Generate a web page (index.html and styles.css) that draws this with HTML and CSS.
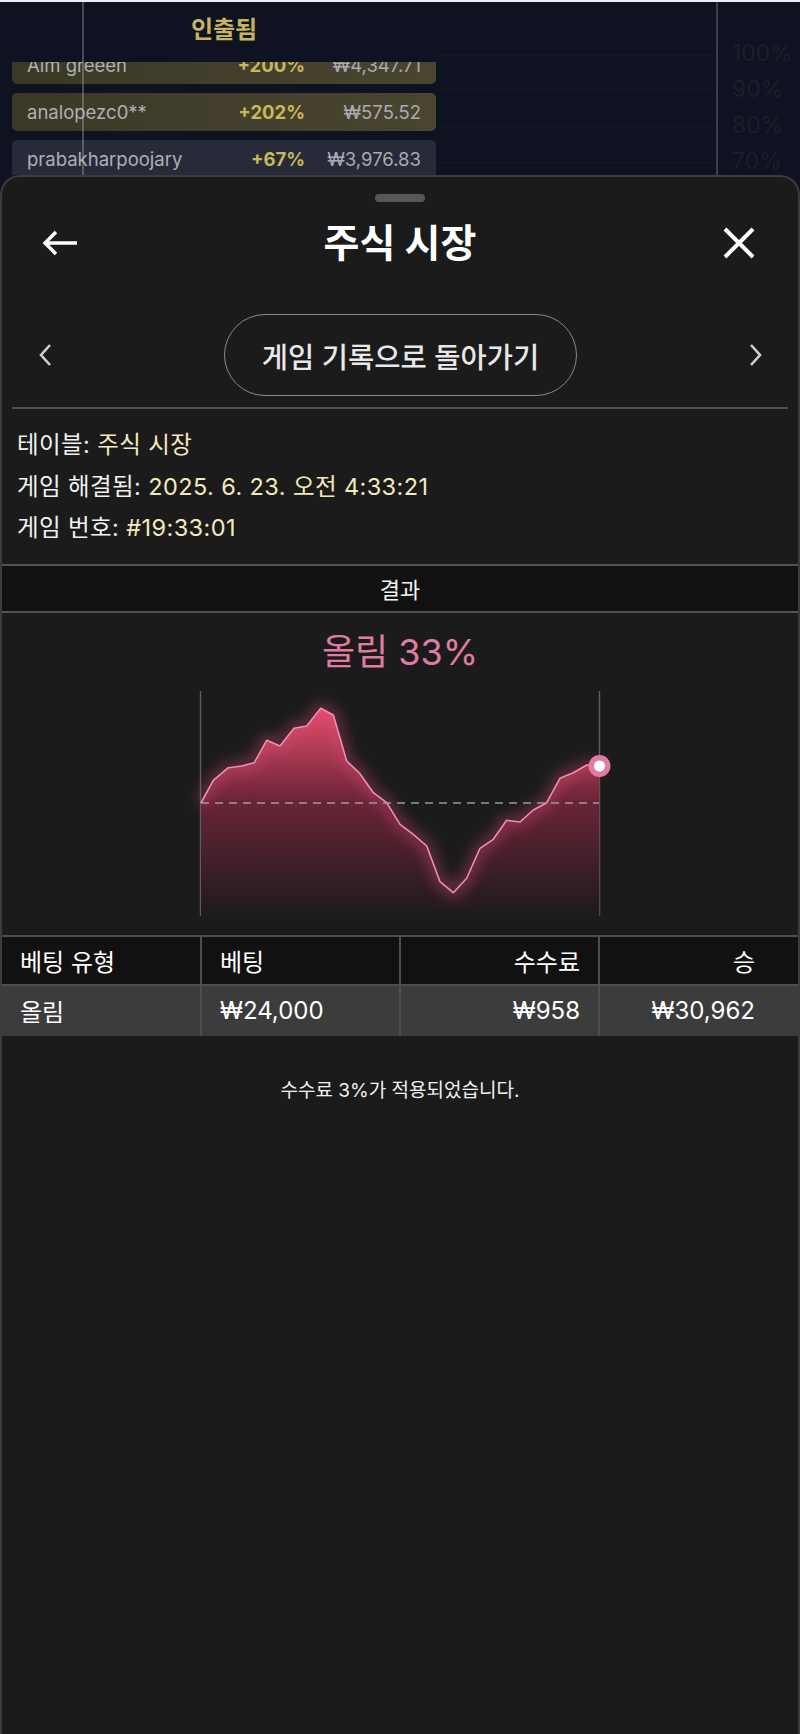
FILE: index.html
```html
<!DOCTYPE html>
<html lang="ko">
<head>
<meta charset="utf-8">
<title>주식 시장</title>
<link rel="stylesheet" href="styles.css">
</head>
<body>
<div class="backdrop">
  <div class="topstrip"></div>
  <div class="bd-grid">
    <div class="panel">
      <div class="panel-title">인출됨</div>
      <div class="rows">
        <div class="row win"><span class="name">Aim greeen</span><span class="pct">+200%</span><span class="amt">₩4,347.71</span></div>
        <div class="row win"><span class="name">analopezc0**</span><span class="pct">+202%</span><span class="amt">₩575.52</span></div>
        <div class="row plain"><span class="name">prabakharpoojary</span><span class="pct">+67%</span><span class="amt">₩3,976.83</span></div>
      </div>
    </div>
    <div class="axis">
      <span>100%</span><span>90%</span><span>80%</span><span>70%</span>
    </div>
  </div>
  <div class="hline h1"></div>
  <div class="hline h2"></div>
  <div class="hline h3"></div>
  <div class="hline h4"></div>
  <div class="vline va"></div>
  <div class="vline vb"></div>
</div>

<div class="sheet">
  <div class="handle"></div>
  <div class="sheet-head">
    <svg class="ico-back" width="36" height="26" viewBox="0 0 36 26"><path d="M3 13 H35 M14 2 L3 13 L14 24" fill="none" stroke="#fff" stroke-width="3.4"/></svg>
    <h1 class="title">주식 시장</h1>
    <svg class="ico-close" width="34" height="32" viewBox="0 0 34 32"><path d="M3 2 L31 30 M31 2 L3 30" fill="none" stroke="#fff" stroke-width="4"/></svg>
  </div>
  <div class="nav">
    <svg class="chev" width="16" height="24" viewBox="0 0 16 24"><path d="M13 2 L4 12 L13 22" fill="none" stroke="#cfcfcf" stroke-width="2.6"/></svg>
    <div class="pill">게임 기록으로 돌아가기</div>
    <svg class="chev" width="16" height="24" viewBox="0 0 16 24"><path d="M3 2 L12 12 L3 22" fill="none" stroke="#cfcfcf" stroke-width="2.6"/></svg>
  </div>
  <div class="divider"></div>
  <div class="info">
    <div>테이블: <span class="val">주식 시장</span></div>
    <div>게임 해결됨: <span class="val">2025. 6. 23. 오전 4:33:21</span></div>
    <div>게임 번호: <span class="val">#19:33:01</span></div>
  </div>
  <div class="result-bar">결과</div>
  <div class="outcome">올림 33%</div>
  <div class="chart">
    <svg width="400" height="225" viewBox="0 0 400 225" overflow="visible">
      <defs>
        <linearGradient id="fillg" x1="0" y1="17" x2="0" y2="225" gradientUnits="userSpaceOnUse">
          <stop offset="0" stop-color="#e54d6c"/>
          <stop offset="0.45" stop-color="#6a2437"/>
          <stop offset="1" stop-color="#1e1a1c"/>
        </linearGradient>
        <filter id="glow" x="-20%" y="-30%" width="140%" height="160%">
          <feGaussianBlur stdDeviation="7"/>
        </filter>
      </defs>
      <line x1="0.5" y1="0" x2="0.5" y2="225" stroke="#5e5e5e" stroke-width="1.4"/>
      <line x1="399.5" y1="0" x2="399.5" y2="225" stroke="#5e5e5e" stroke-width="1.4"/>
      <path d="M1 112 L13.3 89.3 L28.3 76.7 L41.7 75 L54.3 71.7 L66.7 49.3 L80 55 L94 37.3 L106.7 35 L120.7 17.3 L133.3 24 L146.7 70 L160 82.7 L173.3 101.7 L186.7 111.7 L200 133.3 L213.3 143.3 L226.7 155 L240 190.7 L253.3 201.7 L266.7 187.3 L280 157.3 L293.3 148.3 L306.7 129.3 L320 131 L333.3 119 L346.7 111.7 L360 87.3 L373.3 81.7 L386.7 74 L399.3 75 L399.3 225 L1 225 Z" fill="url(#fillg)"/>
      <path d="M1 112 L13.3 89.3 L28.3 76.7 L41.7 75 L54.3 71.7 L66.7 49.3 L80 55 L94 37.3 L106.7 35 L120.7 17.3 L133.3 24 L146.7 70 L160 82.7 L173.3 101.7 L186.7 111.7 L200 133.3 L213.3 143.3 L226.7 155 L240 190.7 L253.3 201.7 L266.7 187.3 L280 157.3 L293.3 148.3 L306.7 129.3 L320 131 L333.3 119 L346.7 111.7 L360 87.3 L373.3 81.7 L386.7 74 L399.3 75" fill="none" stroke="#e04a78" stroke-opacity="0.55" stroke-width="8" filter="url(#glow)"/>
      <line x1="1" y1="112" x2="399" y2="112" stroke="#9a9a9a" stroke-width="1.3" stroke-dasharray="8 6"/>
      <path d="M1 112 L13.3 89.3 L28.3 76.7 L41.7 75 L54.3 71.7 L66.7 49.3 L80 55 L94 37.3 L106.7 35 L120.7 17.3 L133.3 24 L146.7 70 L160 82.7 L173.3 101.7 L186.7 111.7 L200 133.3 L213.3 143.3 L226.7 155 L240 190.7 L253.3 201.7 L266.7 187.3 L280 157.3 L293.3 148.3 L306.7 129.3 L320 131 L333.3 119 L346.7 111.7 L360 87.3 L373.3 81.7 L386.7 74 L399.3 75" fill="none" stroke="#ec8fb4" stroke-width="1.6" stroke-linejoin="round"/>
      <circle cx="399.5" cy="75" r="11" fill="#e07ba3"/>
      <circle cx="399.5" cy="75" r="5.5" fill="#fff"/>
    </svg>
  </div>
  <table class="bets">
    <thead>
      <tr><th class="l">베팅 유형</th><th class="l">베팅</th><th class="r">수수료</th><th class="r last">승</th></tr>
    </thead>
    <tbody>
      <tr><td class="l">올림</td><td class="l">₩24,000</td><td class="r">₩958</td><td class="r last">₩30,962</td></tr>
    </tbody>
  </table>
  <p class="note">수수료 3%가 적용되었습니다.</p>
</div>
</body>
</html>
```

FILE: styles.css
```css
* { box-sizing: border-box; }
html, body { margin: 0; padding: 0; }
body {
  background: #0f1220;
  font-family: Inter, "Noto Sans CJK KR", sans-serif;
  color: #f0f0f0;
  width: 800px;
}

/* ---------- backdrop ---------- */
.backdrop {
  position: relative;
  height: 175px;
  overflow: hidden;
  background: #0f1220;
}
.topstrip { height: 2px; background: #eceef3; }
.bd-grid {
  display: grid;
  grid-template-columns: 424px 1fr 72px;
  padding-left: 12px;
}
.panel { grid-column: 1; }
.panel-title {
  height: 60px;
  line-height: 56px;
  text-align: center;
  color: #c7b45e;
  font-size: 24px;
  font-weight: 700;
}
.rows {
  display: flex;
  flex-direction: column;
  gap: 9px;
  height: 140px;
  overflow: hidden;
}
.row {
  flex: 0 0 38px;
  display: grid;
  grid-template-columns: 1fr auto 116px;
  align-items: center;
  padding: 0 15px 0 15px;
  border-radius: 5px;
  font-size: 18.5px;
  color: #aeb0b6;
}
.row:first-child { margin-top: -16px; }
.row.win { background: linear-gradient(90deg, #3a3826 0%, #4a4531 100%); }
.row.plain { background: #272b39; }
.row .pct { color: #c9b85a; font-weight: 700; text-align: right; }
.row .amt { text-align: right; color: #a9abb1; }
.axis {
  grid-column: 3;
  display: flex;
  flex-direction: column;
  gap: 8px;
  padding-top: 37px;
  padding-left: 4px;
  font-size: 23px;
  line-height: 28px;
  color: #1c1f2d;
}
.hline {
  position: absolute;
  left: 436px;
  width: 278px;
  height: 1px;
  background: #151927;
}
.h1 { top: 55px; }
.h2 { top: 89px; }
.h3 { top: 126px; }
.h4 { top: 162px; }
.vline {
  position: absolute;
  top: 2px;
  bottom: 0;
  width: 2px;
}
.va { left: 82px; background: rgba(190, 195, 210, 0.32); }
.vb { left: 716px; background: #3a3d4b; }

/* ---------- sheet ---------- */
.sheet {
  background: #1b1b1b;
  border: 2px solid #3c3c3c;
  border-bottom: none;
  border-radius: 20px 20px 0 0;
  min-height: 1559px;
  display: flex;
  flex-direction: column;
}
.handle {
  width: 50px;
  height: 8px;
  border-radius: 4px;
  background: #575757;
  margin: 17px auto 0;
}
.sheet-head {
  display: flex;
  align-items: center;
  justify-content: space-between;
  height: 56px;
  margin-top: 13px;
  padding: 0 42px 0 40px;
}
.title {
  margin: 0;
  font-size: 39px;
  font-weight: 700;
  color: #fff;
  line-height: 56px;
}
.nav {
  display: flex;
  align-items: center;
  justify-content: space-between;
  margin-top: 43px;
  padding: 0 34px 0 35px;
}
.pill {
  width: 353px;
  height: 82px;
  border: 1.5px solid #8a8a8a;
  border-radius: 41px;
  display: flex;
  align-items: center;
  justify-content: center;
  font-size: 28.5px;
  font-weight: 500;
  color: #e8e8e8;
}
.divider {
  height: 2px;
  background: #525252;
  margin: 11px 10px 0;
}
.info {
  padding: 15px 15px 0;
  font-size: 23.5px;
  letter-spacing: 0.4px;
  line-height: 41.5px;
  color: #f2f2f2;
}
.info .val { color: #f3e9bd; }
.result-bar {
  margin-top: 15px;
  height: 49px;
  border-top: 2px solid #525252;
  border-bottom: 2px solid #525252;
  background: #111111;
  display: flex;
  align-items: center;
  justify-content: center;
  font-size: 22px;
  color: #f4f4f4;
}
.outcome {
  margin-top: 17px;
  text-align: center;
  font-size: 36px;
  line-height: 44px;
  color: #e07ba3;
}
.chart {
  margin-top: 17px;
  display: flex;
  justify-content: center;
  height: 225px;
}
.chart svg { overflow: visible; display: block; }
.bets {
  margin-top: 19px;
  width: 100%;
  border-collapse: collapse;
  table-layout: fixed;
  font-size: 24px;
  color: #fff;
}
.bets th, .bets td {
  border: 2px solid #4e4e4e;
  padding: 0 18px;
  font-weight: 400;
}
.bets th { height: 49px; background: #111; }
.bets td { height: 51px; background: #3c3c3c; border-bottom: none; }
.bets tr > *:first-child { border-left: none; }
.bets tr > *:last-child { border-right: none; }
.bets .l { text-align: left; }
.bets .r { text-align: right; }
.bets .last { padding-right: 43px; }
.note {
  margin: 43px 0 0;
  text-align: center;
  font-size: 19px;
  line-height: 24px;
  color: #f2f2f2;
}
```
